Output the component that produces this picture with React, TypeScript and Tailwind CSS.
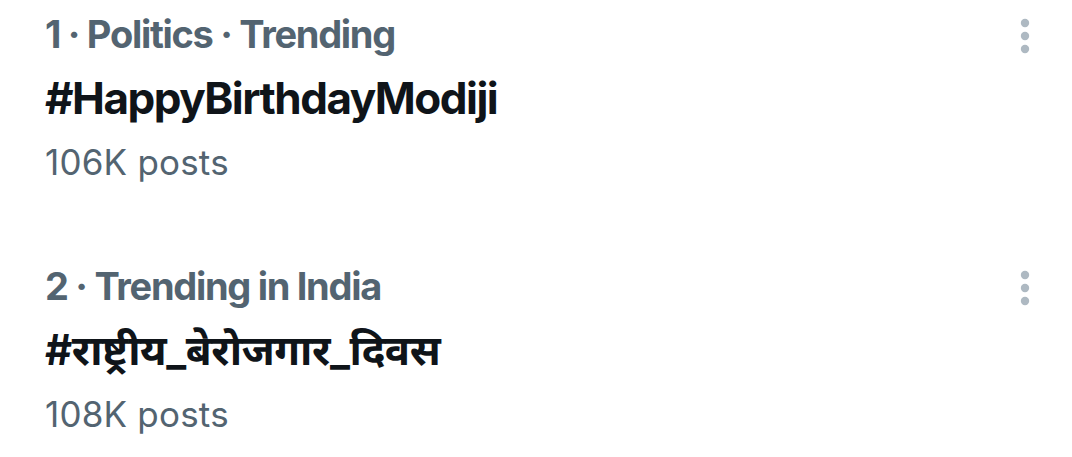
import React from "react";

const items = [
  { label: "1 · Politics · Trending", title: "#HappyBirthdayModiji", posts: "106K posts", hindi: false },
  { label: "2 · Trending in India", title: "#राष्ट्रीय_बेरोजगार_दिवस", posts: "108K posts", hindi: true },
];

function Dots() {
  return (
    <svg width="12" height="40" viewBox="0 0 12 40" className="block">
      <circle cx="6" cy="7" r="4.2" fill="#aeb9c2" />
      <circle cx="6" cy="20" r="4.2" fill="#aeb9c2" />
      <circle cx="6" cy="33" r="4.2" fill="#aeb9c2" />
    </svg>
  );
}

export default function App() {
  return (
    <div
      className="w-[1072px] h-[457px] bg-white overflow-hidden flex flex-col gap-[60px] pt-[2px]"
      style={{ fontFamily: "Inter, Roboto, 'Noto Sans', 'Noto Sans Devanagari', sans-serif" }}
    >
      {items.map((it) => (
        <div key={it.label} className="flex items-start pl-[45px] pr-[41px]">
          <div className="flex-1 flex flex-col">
            <div className="text-[38px] leading-[64px] font-bold text-[#536471] tracking-[-1.3px]">{it.label}</div>
            <div
              className={
                it.hindi
                  ? "text-[42px] leading-[64px] font-bold text-[#0f1419] tracking-[-0.5px]"
                  : "text-[44px] leading-[64px] font-bold text-[#0f1419] tracking-[-1.5px]"
              }
            >
              {it.title}
            </div>
            <div className="text-[35px] leading-[64px] text-[#536471] tracking-[0.2px]">{it.posts}</div>
          </div>
          <div className="pt-[14px]">
            <Dots />
          </div>
        </div>
      ))}
    </div>
  );
}
